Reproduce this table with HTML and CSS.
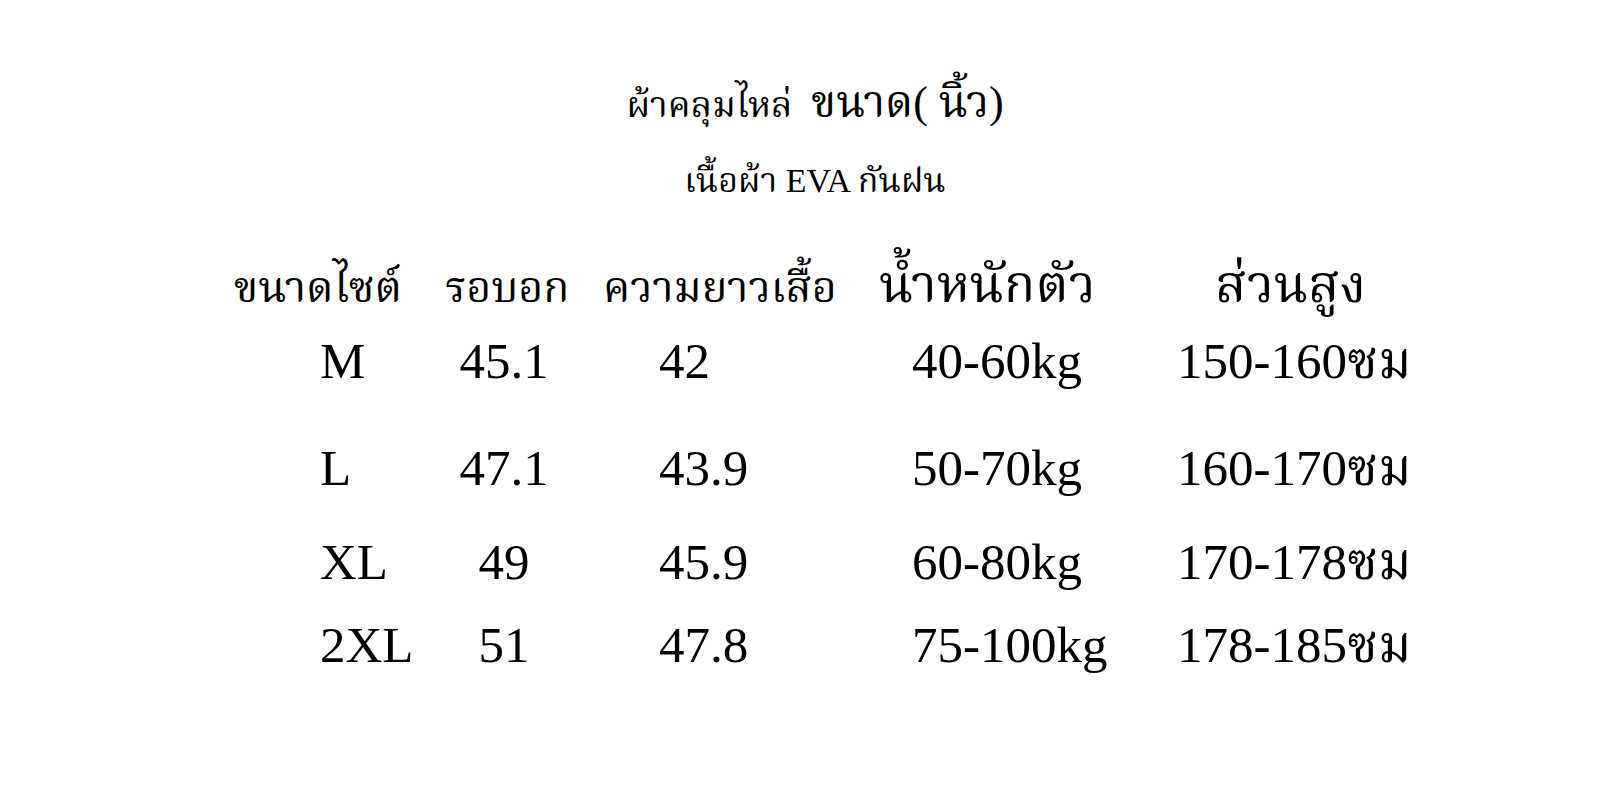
FILE: index.html
```html
<!DOCTYPE html>
<html lang="th">
<head>
<meta charset="utf-8">
<title>ผ้าคลุมไหล่ ขนาด</title>
<link rel="stylesheet" href="styles.css">
</head>
<body>
<div class="page">
  <h1 class="title"><span class="t1">ผ้าคลุมไหล่</span>&nbsp; <span class="t2">ขนาด( นิ้ว)</span></h1>
  <p class="subtitle">เนื้อผ้า EVA กันฝน</p>
  <div class="head-row">
    <span>ขนาดไซต์</span>
    <span>รอบอก</span>
    <span>ความยาวเสื้อ</span>
    <span class="big">น้ำหนักตัว</span>
    <span class="big">ส่วนสูง</span>
  </div>
  <div class="rows">
    <div class="row r1"><span>M</span><span class="c2">45.1</span><span class="c3">42</span><span>40-60kg</span><span>150-160ซม</span></div>
    <div class="row r2"><span>L</span><span class="c2">47.1</span><span class="c3">43.9</span><span>50-70kg</span><span>160-170ซม</span></div>
    <div class="row r3"><span>XL</span><span class="c2">49</span><span class="c3">45.9</span><span>60-80kg</span><span>170-178ซม</span></div>
    <div class="row r4"><span>2XL</span><span class="c2">51</span><span class="c3">47.8</span><span>75-100kg</span><span>178-185ซม</span></div>
  </div>
</div>
</body>
</html>
```
FILE: styles.css
```css
html, body {
  margin: 0;
  padding: 0;
  background: #ffffff;
}
.page {
  width: 1600px;
  height: 797px;
  color: #000;
  font-family: "Liberation Serif", "Noto Serif Thai", "Noto Sans Thai Looped", "Loma", "Garuda", "Kinnari", "Laksaman", "Norasi", "Waree", "Umpush", "Sawasdee", "Noto Sans Thai", serif;
  overflow: hidden;
}
.title {
  margin: 0;
  padding: 78px 0 0 30px;
  font-weight: normal;
  font-size: 38px;
  line-height: 50px;
  text-align: center;
}
.t1 {
  font-size: 36px;
}
.t2 {
  font-size: 44px;
}
.subtitle {
  margin: 31px 0 0;
  padding-left: 30px;
  font-size: 34px;
  line-height: 40px;
  text-align: center;
}
.head-row {
  margin-top: 59px;
  display: grid;
  grid-template-columns: 211px 158px 276px 336px 1fr;
  align-items: baseline;
  padding-left: 234px;
  font-size: 43px;
  line-height: 50px;
}
.head-row .big {
  font-size: 52px;
}
.rows {
  margin-top: 20px;
  font-size: 51px;
  line-height: 56px;
}
.row {
  display: grid;
  grid-template-columns: 130px 108px 354px 265px 1fr;
  padding-left: 320px;
}
.row .c2 {
  text-align: center;
}
.row .c3 {
  padding-left: 101px;
}
.r2 { margin-top: 51px; }
.r3 { margin-top: 38px; }
.r4 { margin-top: 27px; }
```
